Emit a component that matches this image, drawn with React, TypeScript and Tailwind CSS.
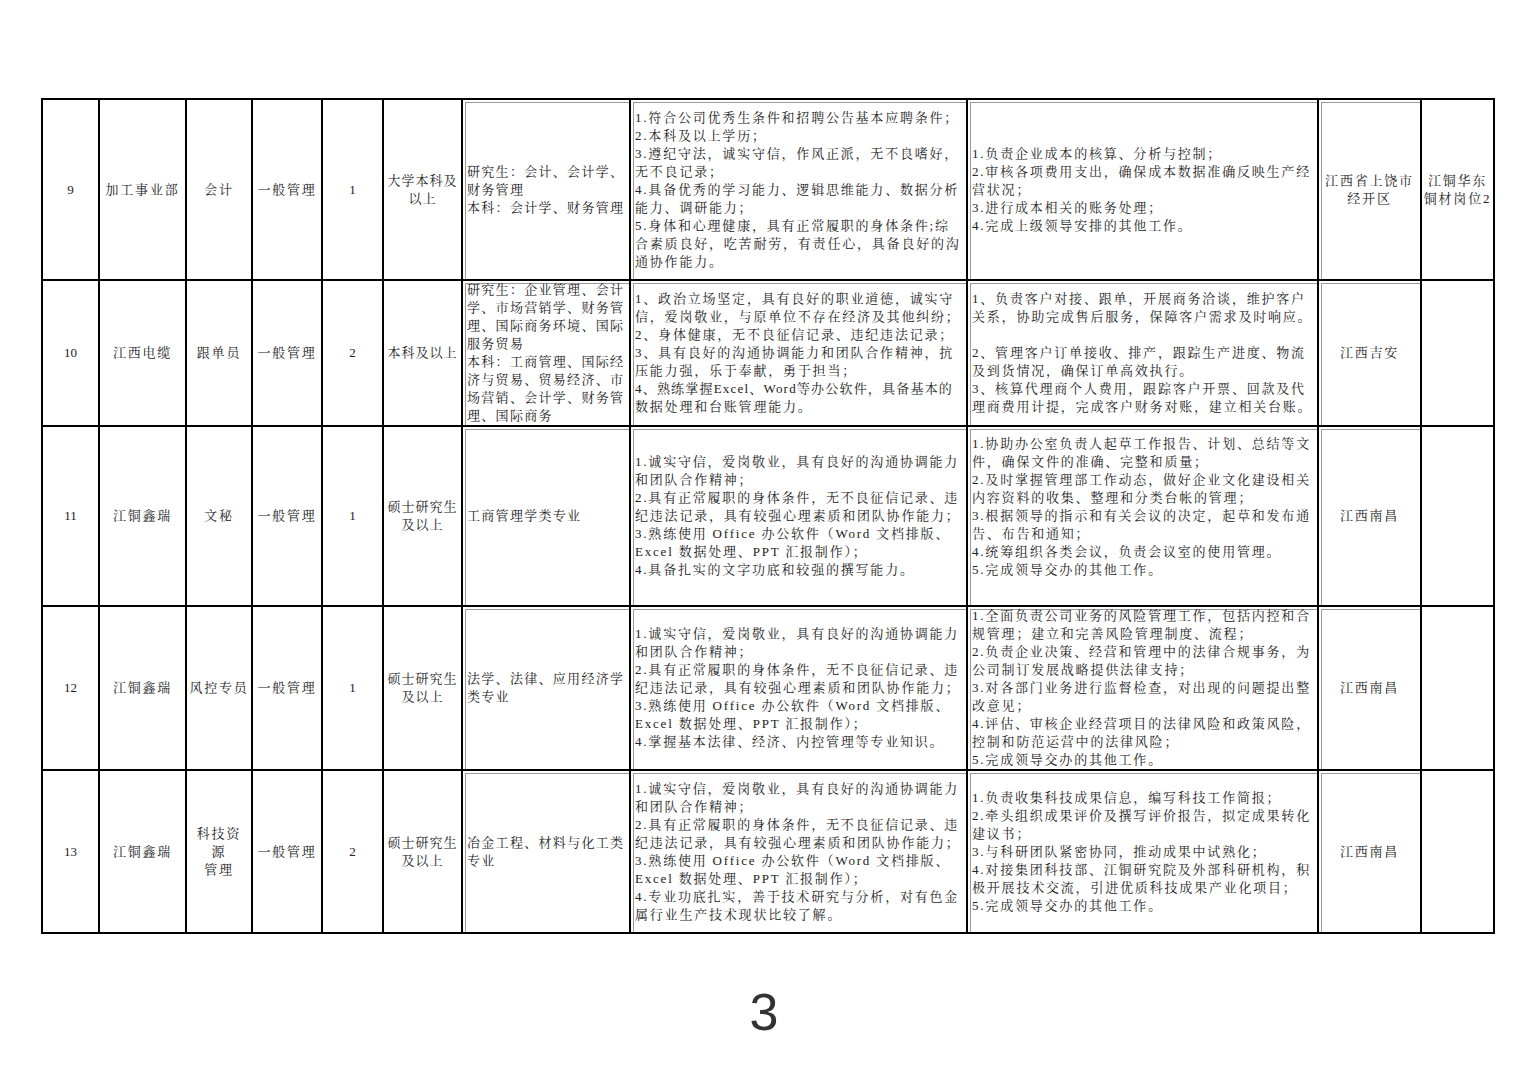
type Row = {
  no: string
  dept: string[]
  post: string[]
  kind: string[]
  num: string
  edu: string[]
  major: string[]
  req: string[]
  duty: string[]
  loc: string[]
  note: string[]
}

const officeReq = [
  "1.诚实守信，爱岗敬业，具有良好的沟通协调能力",
  "和团队合作精神；",
  "2.具有正常履职的身体条件，无不良征信记录、违",
  "纪违法记录，具有较强心理素质和团队协作能力；",
  "3.熟练使用 Office 办公软件（Word 文档排版、",
  "Excel 数据处理、PPT 汇报制作）；",
]

// lines that are a bit wider than the column in our fonts
const tight = new Set(["4、熟练掌握Excel、Word等办公软件，具备基本的"])

const rows: Row[] = [
  {
    no: "9",
    dept: ["加工事业部"],
    post: ["会计"],
    kind: ["一般管理"],
    num: "1",
    edu: ["大学本科及", "以上"],
    major: ["研究生：会计、会计学、", "财务管理", "本科：会计学、财务管理"],
    req: [
      "1.符合公司优秀生条件和招聘公告基本应聘条件；",
      "2.本科及以上学历；",
      "3.遵纪守法，诚实守信，作风正派，无不良嗜好，",
      "无不良记录；",
      "4.具备优秀的学习能力、逻辑思维能力、数据分析",
      "能力、调研能力；",
      "5.身体和心理健康，具有正常履职的身体条件;综",
      "合素质良好，吃苦耐劳，有责任心，具备良好的沟",
      "通协作能力。",
    ],
    duty: [
      "1.负责企业成本的核算、分析与控制；",
      "2.审核各项费用支出，确保成本数据准确反映生产经",
      "营状况；",
      "3.进行成本相关的账务处理；",
      "4.完成上级领导安排的其他工作。",
    ],
    loc: ["江西省上饶市", "经开区"],
    note: ["江铜华东", "铜材岗位2"],
  },
  {
    no: "10",
    dept: ["江西电缆"],
    post: ["跟单员"],
    kind: ["一般管理"],
    num: "2",
    edu: ["本科及以上"],
    major: [
      "研究生：企业管理、会计",
      "学、市场营销学、财务管",
      "理、国际商务环境、国际",
      "服务贸易",
      "本科：工商管理、国际经",
      "济与贸易、贸易经济、市",
      "场营销、会计学、财务管",
      "理、国际商务",
    ],
    req: [
      "1、政治立场坚定，具有良好的职业道德，诚实守",
      "信，爱岗敬业，与原单位不存在经济及其他纠纷；",
      "2、身体健康，无不良征信记录、违纪违法记录；",
      "3、具有良好的沟通协调能力和团队合作精神，抗",
      "压能力强，乐于奉献，勇于担当；",
      "4、熟练掌握Excel、Word等办公软件，具备基本的",
      "数据处理和台账管理能力。",
    ],
    duty: [
      "1、负责客户对接、跟单，开展商务洽谈，维护客户",
      "关系，协助完成售后服务，保障客户需求及时响应。",
      "",
      "2、管理客户订单接收、排产，跟踪生产进度、物流",
      "及到货情况，确保订单高效执行。",
      "3、核算代理商个人费用，跟踪客户开票、回款及代",
      "理商费用计提，完成客户财务对账，建立相关台账。",
    ],
    loc: ["江西吉安"],
    note: [],
  },
  {
    no: "11",
    dept: ["江铜鑫瑞"],
    post: ["文秘"],
    kind: ["一般管理"],
    num: "1",
    edu: ["硕士研究生", "及以上"],
    major: ["工商管理学类专业"],
    req: [...officeReq, "4.具备扎实的文字功底和较强的撰写能力。"],
    duty: [
      "1.协助办公室负责人起草工作报告、计划、总结等文",
      "件，确保文件的准确、完整和质量；",
      "2.及时掌握管理部工作动态，做好企业文化建设相关",
      "内容资料的收集、整理和分类台帐的管理；",
      "3.根据领导的指示和有关会议的决定，起草和发布通",
      "告、布告和通知；",
      "4.统筹组织各类会议，负责会议室的使用管理。",
      "5.完成领导交办的其他工作。",
      "",
    ],
    loc: ["江西南昌"],
    note: [],
  },
  {
    no: "12",
    dept: ["江铜鑫瑞"],
    post: ["风控专员"],
    kind: ["一般管理"],
    num: "1",
    edu: ["硕士研究生", "及以上"],
    major: ["法学、法律、应用经济学", "类专业"],
    req: [...officeReq, "4.掌握基本法律、经济、内控管理等专业知识。"],
    duty: [
      "1.全面负责公司业务的风险管理工作，包括内控和合",
      "规管理；建立和完善风险管理制度、流程；",
      "2.负责企业决策、经营和管理中的法律合规事务，为",
      "公司制订发展战略提供法律支持；",
      "3.对各部门业务进行监督检查，对出现的问题提出整",
      "改意见；",
      "4.评估、审核企业经营项目的法律风险和政策风险，",
      "控制和防范运营中的法律风险；",
      "5.完成领导交办的其他工作。",
    ],
    loc: ["江西南昌"],
    note: [],
  },
  {
    no: "13",
    dept: ["江铜鑫瑞"],
    post: ["科技资", "源", "管理"],
    kind: ["一般管理"],
    num: "2",
    edu: ["硕士研究生", "及以上"],
    major: ["冶金工程、材料与化工类", "专业"],
    req: [
      ...officeReq,
      "4.专业功底扎实，善于技术研究与分析，对有色金",
      "属行业生产技术现状比较了解。",
    ],
    duty: [
      "1.负责收集科技成果信息，编写科技工作简报；",
      "2.牵头组织成果评价及撰写评价报告，拟定成果转化",
      "建议书；",
      "3.与科研团队紧密协同，推动成果中试熟化；",
      "4.对接集团科技部、江铜研究院及外部科研机构，积",
      "极开展技术交流，引进优质科技成果产业化项目；",
      "5.完成领导交办的其他工作。",
    ],
    loc: ["江西南昌"],
    note: [],
  },
]

const heights = ["h-[181px]", "h-[144px]", "h-[180px]", "h-[162px]", "h-[163px]"]

function Lines({ lines }: { lines: string[] }) {
  return (
    <>
      {lines.map((l, i) =>
        l === "" ? (
          <div key={i} className="h-[18px]" />
        ) : (
          <div key={i} className={tight.has(l) ? "whitespace-nowrap tracking-[1.2px]" : "whitespace-nowrap"}>
            {l}
          </div>
        )
      )}
    </>
  )
}

const cell = "border-2 border-black p-0 align-middle overflow-hidden"
const center = `${cell} text-center`
const inner = "shadow-[inset_2px_2px_0_0_#fff,inset_3px_3px_0_0_#9a9a9a]"

export default function App() {
  return (
    <div
      className="w-[1528px] h-[1080px] bg-white pt-[98px] text-[#222]"
      style={{ fontFamily: '"Liberation Serif", "Noto Serif CJK SC", "Noto Sans CJK SC", serif' }}
    >
      <table className="ml-[41px] w-[1452px] table-fixed border-collapse border-2 border-black text-[13px] leading-[18px] tracking-[1.8px]">
        <colgroup>
          <col className="w-[57px]" />
          <col className="w-[87px]" />
          <col className="w-[66px]" />
          <col className="w-[70px]" />
          <col className="w-[61px]" />
          <col className="w-[79px]" />
          <col className="w-[168px]" />
          <col className="w-[337px]" />
          <col className="w-[351px]" />
          <col className="w-[103px]" />
          <col className="w-[73px]" />
        </colgroup>
        <tbody>
          {rows.map((r, i) => (
            <tr key={r.no} className={heights[i]}>
              <td className={`${center} tracking-normal`}>{r.no}</td>
              <td className={center}>
                <Lines lines={r.dept} />
              </td>
              <td className={center}>
                <Lines lines={r.post} />
              </td>
              <td className={center}>
                <Lines lines={r.kind} />
              </td>
              <td className={`${center} tracking-normal`}>{r.num}</td>
              <td className={`${center} tracking-[1px]`}>
                <Lines lines={r.edu} />
              </td>
              <td className={`${cell} ${inner} pl-[4px] tracking-[1.3px]`}>
                <Lines lines={r.major} />
              </td>
              <td className={`${cell} ${inner} pl-[4px]`}>
                <Lines lines={r.req} />
              </td>
              <td className={`${cell} ${inner} pl-[4px]`}>
                <Lines lines={r.duty} />
              </td>
              <td className={`${center} ${inner}`}>
                <Lines lines={r.loc} />
              </td>
              <td className={center}>
                <Lines lines={r.note} />
              </td>
            </tr>
          ))}
        </tbody>
      </table>
      <div
        className="mt-[52px] text-center text-[52px] leading-none text-[#333]"
        style={{ fontFamily: '"Liberation Sans", Arial, sans-serif' }}
      >
        3
      </div>
    </div>
  )
}
